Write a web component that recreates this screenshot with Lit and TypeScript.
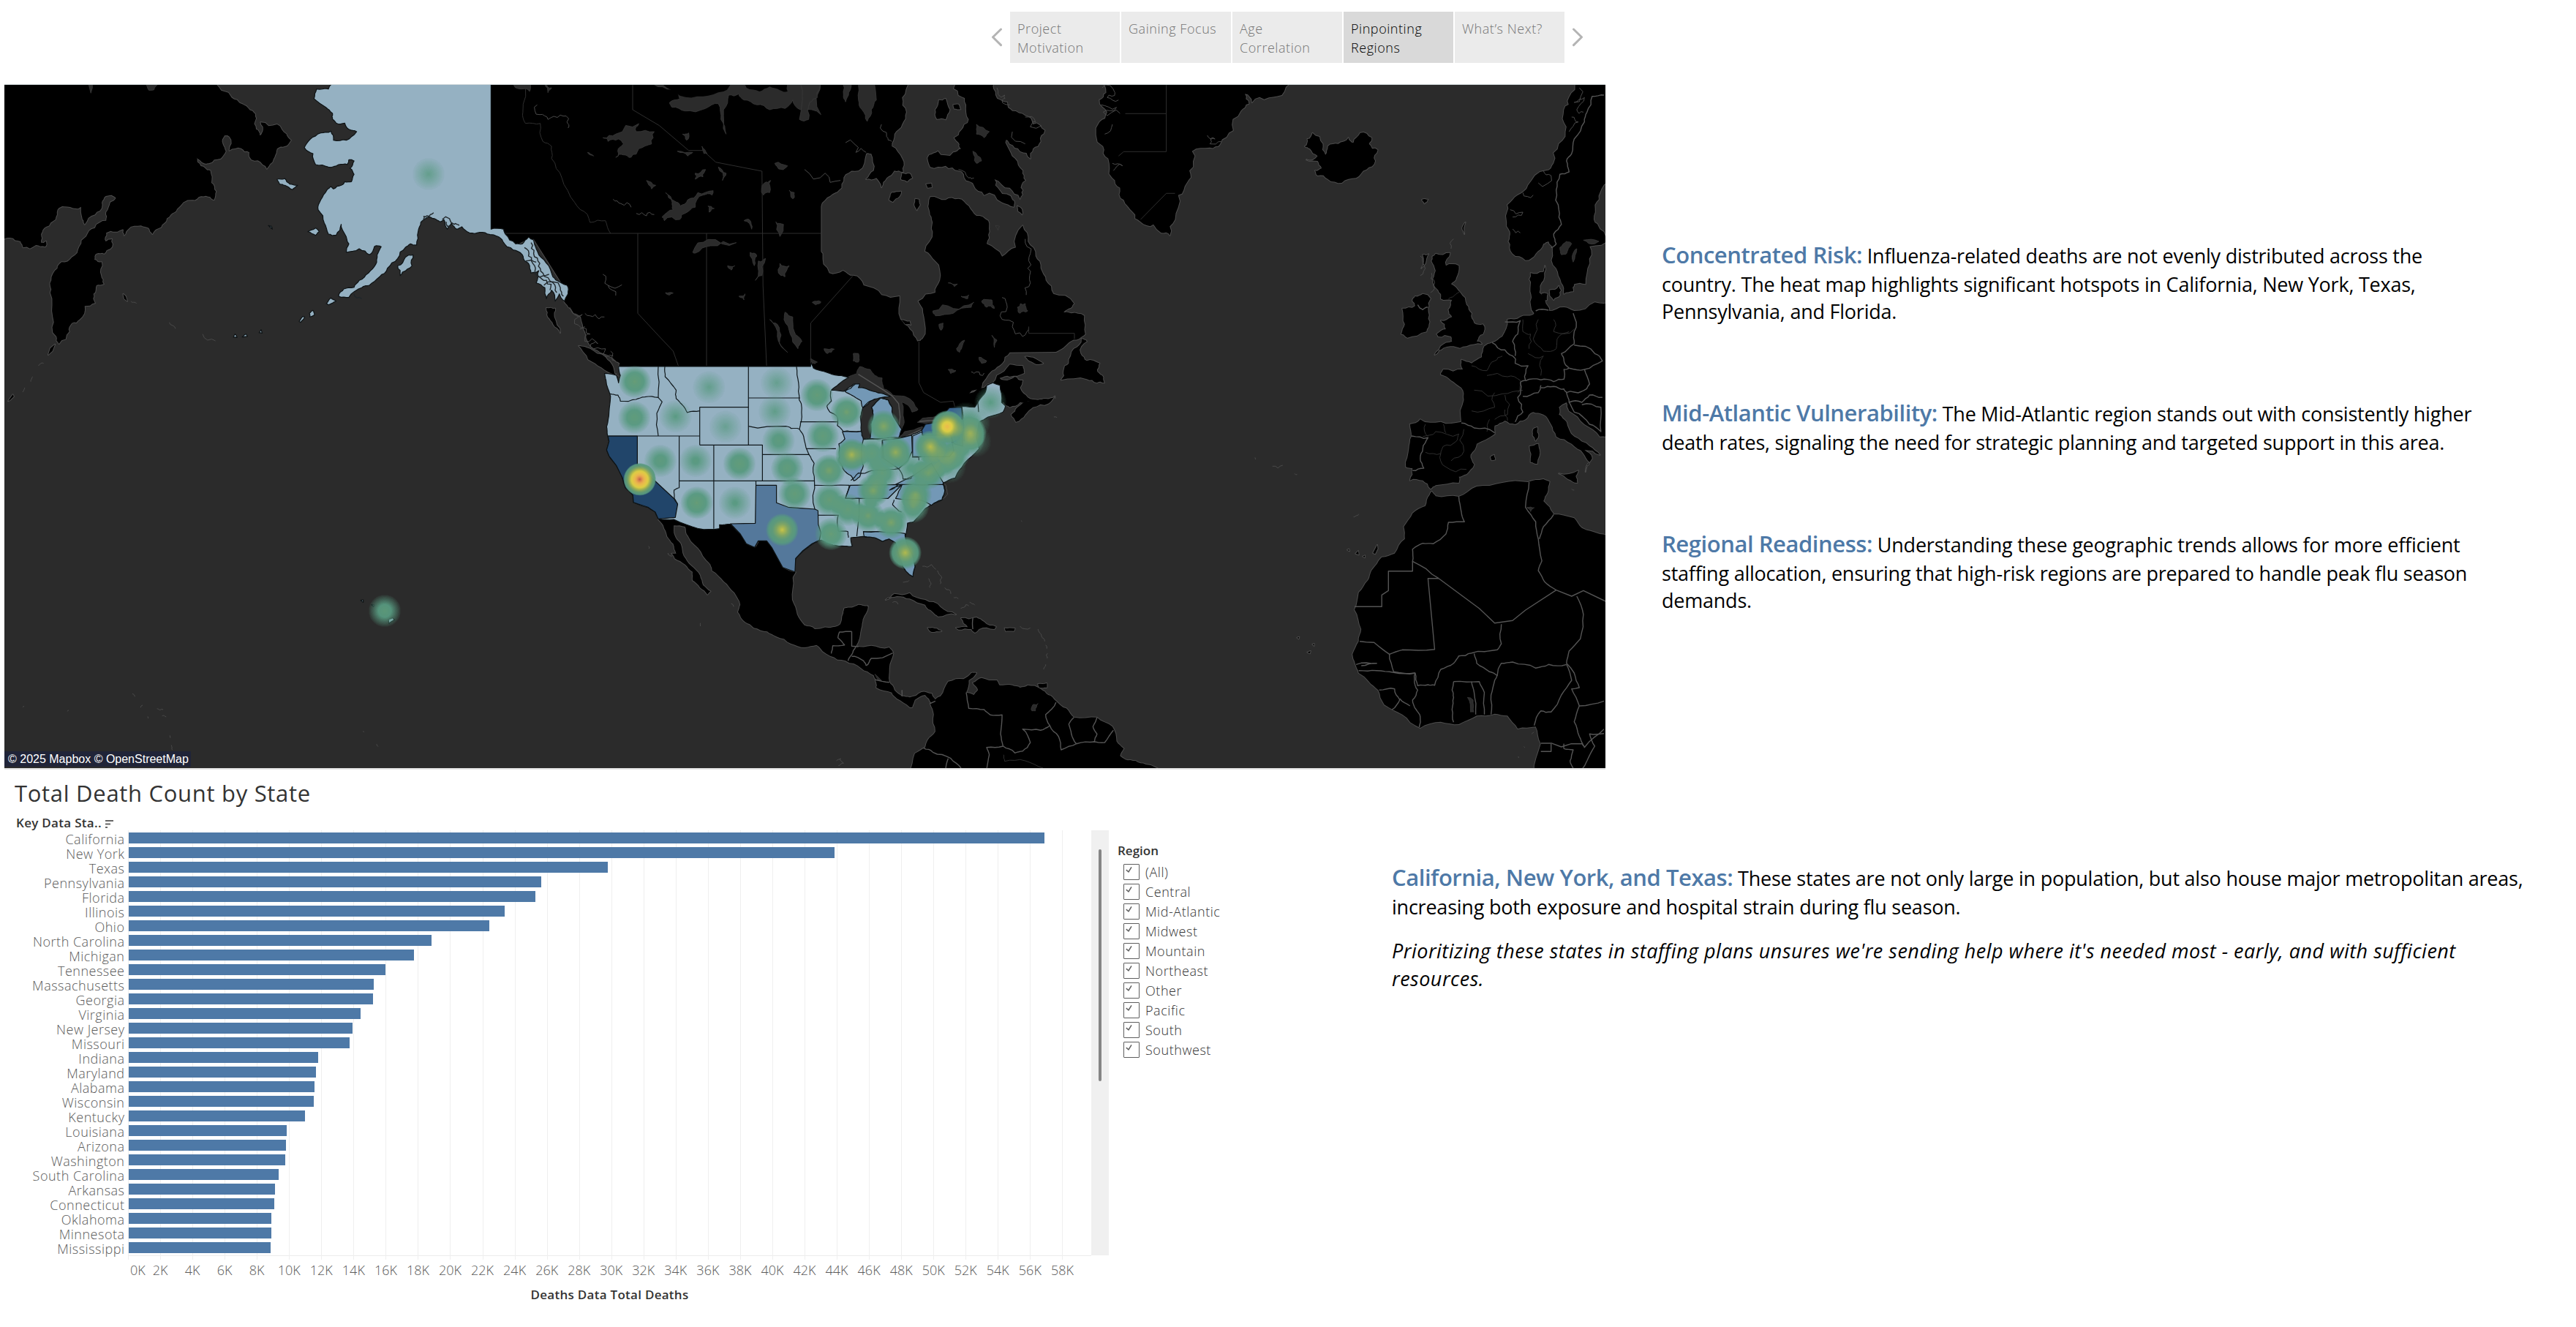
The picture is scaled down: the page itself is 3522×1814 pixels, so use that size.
import { LitElement, html, svg, css } from "lit";
import { customElement } from "lit/decorators.js";

type Pt = [number, number];

/* Map sections: each has an origin on the page and its own horizontal unit. */
interface Section { x: number; y: number; sx: number; sy: number }
const NW: Section = { x: 0, y: 100, sx: 1100 / 1568, sy: 1 / 3 };
const NE: Section = { x: 1100, y: 100, sx: 1100 / 1568, sy: 1 / 3 };
const SW: Section = { x: 0, y: 560, sx: 1100 / 1568, sy: 1 / 3 };
const SE: Section = { x: 1100, y: 560, sx: 1100 / 1568, sy: 1 / 3 };
const US: Section = { x: 800, y: 470, sx: 640 / 1568, sy: 1 / 3 };

const project = (s: Section, pts: string): Pt[] =>
  pts.trim().split(/\s+/).map((p) => {
    const [a, b] = p.split(",").map(Number);
    return [s.x + a * s.sx, s.y + b * s.sy] as Pt;
  });

/* Deterministic noise so coastlines look irregular yet always identical. */
const noise = (a: number, b: number) => {
  const v = Math.sin(a * 12.9898 + b * 78.233) * 43758.5453;
  return v - Math.floor(v) - 0.5;
};
const roughen = (pts: Pt[], amp: number, closed: boolean, depth = 2): Pt[] => {
  if (!depth || !amp) return pts;
  const out: Pt[] = [];
  const n = pts.length;
  for (let i = 0; i < n; i++) {
    const a = pts[i];
    out.push(a);
    if (i === n - 1 && !closed) break;
    const b = pts[(i + 1) % n];
    const dx = b[0] - a[0], dy = b[1] - a[1], len = Math.hypot(dx, dy);
    if (len < 3 || len > 60) continue;
    const k = noise(a[0] + b[0], a[1] + b[1]) * amp;
    out.push([(a[0] + b[0]) / 2 - dy * k, (a[1] + b[1]) / 2 + dx * k]);
  }
  return roughen(out, amp, closed, depth - 1);
};
const d = (s: Section, pts: string, amp = 0, closed = true) =>
  "M" + roughen(project(s, pts), amp, closed).map((p) => p[0].toFixed(1) + " " + p[1].toFixed(1)).join("L") + (closed ? "Z" : "");

const LAND: [Section, string, number][] = [
  // Eastern Russia and Kamchatka
  [NW, "0,30 412,30 422,47 445,80 462,110 475,130 492,155 499,185 499,230 506,255 512,240 508,202 540,210 558,250 567,275 555,300 540,310 535,345 528,370 520,392 512,375 490,355 486,325 470,308 447,317 447,260 438,255 434,290 440,320 430,350 407,370 398,370 382,345 385,365 400,390 410,400 412,450 421,485 417,520 410,508 392,505 375,520 345,557 333,580 320,615 305,640 297,660 290,635 275,625 250,640 242,665 240,640 225,650 207,655 206,690 218,680 215,720 203,740 188,740 184,765 198,775 197,830 202,865 188,870 182,905 185,943 165,955 155,1010 140,1025 135,1060 115,1110 110,1080 103,1000 98,900 100,850 112,800 120,775 140,755 155,710 168,670 185,635 207,605 207,570 215,530 226,512 218,500 203,510 199,540 185,580 165,620 160,590 158,548 148,555 125,547 112,560 108,600 90,630 80,660 80,695 90,690 88,712 70,705 45,715 40,690 20,675 0,690", 0.35],
  [NW, "107,1112 102,1140 94,1155 98,1128", 0],
  [NW, "16,1345 25,1318 27,1326 20,1340", 0],
  [NW, "240,905 245,915 248,935 242,925", 0],
  // Western Canada
  [NW, "950,30 1600,30 1600,1210 1207,1210 1208,1190 1195,1170 1170,1145 1148,1110 1140,1060 1132,1000 1118,985 1108,960 1098,925 1100,880 1040,680 1020,690 1005,710 985,660 950,640", 0.2],
  [NW, "1128,1118 1150,1130 1180,1165 1195,1205 1200,1237 1185,1225 1160,1190 1138,1145", 0.3],
  [NW, "1065,963 1082,965 1080,1000 1092,1065 1078,1030 1068,1000", 0.3],
  // Central and eastern Canada
  [NE, "-10,30 200,30 190,100 198,160 190,210 175,250 170,300 190,350 192,405 175,400 160,430 150,468 140,430 120,435 135,400 130,330 120,330 105,400 80,415 72,470 60,490 40,520 30,580 18,620 17,700 35,740 48,820 75,810 95,830 115,870 150,910 185,915 187,1010 205,1050 220,1100 230,1090 233,1000 222,935 255,900 264,850 255,770 235,730 250,650 248,600 243,560 245,508 275,520 300,515 320,545 335,585 358,605 360,650 355,700 385,752 412,715 425,625 435,690 450,750 460,800 470,850 485,905 525,945 515,965 485,1000 520,985 545,995 547,1070 535,1090 515,1105 490,1143 400,1145 385,1190 365,1220 345,1290 310,1325 350,1290 375,1240 400,1195 425,1200 428,1230 400,1245 380,1250 395,1260 410,1245 425,1260 420,1290 435,1330 455,1340 470,1335 488,1325 475,1355 445,1370 430,1400 412,1430 403,1400 415,1370 440,1345 420,1350 400,1370 388,1350 330,1400 300,1490 190,1495 100,1400 -10,1300", 0.3],
  [NE, "290,30 370,40 372,90 395,120 405,155 430,175 445,210 468,235 460,280 445,310 440,350 420,320 400,290 385,240 395,300 410,350 425,400 430,440 425,480 420,515 400,470 370,435 380,480 405,520 408,548 385,530 350,500 330,460 315,440 300,400 275,380 245,385 243,335 260,320 290,325 305,310 300,285 292,265 305,235 320,190 315,130 300,90", 0.5],
  [NE, "262,110 275,105 283,150 275,190 258,188 255,150", 0.3],
  [NE, "290,130 300,128 304,148 292,146", 0.2],
  [NE, "165,520 170,490 188,485 185,505 172,528", 0.2],
  [NE, "216,515 223,518 225,540 219,562 214,540", 0.2],
  [NE, "237,455 247,452 248,468 240,470", 0],
  [NE, "190,410 205,412 210,430 200,445 188,435", 0.3],
  [NE, "188,1012 205,1018 207,1032 196,1030", 0.2],
  [NE, "415,545 424,560 424,580 416,565", 0.2],
  [NE, "540,1090 550,1100 538,1150 550,1180 575,1190 570,1215 580,1240 584,1270 570,1270 550,1255 500,1258 505,1220 515,1190 525,1130", 0.4],
  [NE, "430,1163 445,1166 465,1190 452,1194 438,1180", 0.1],
  // Greenland and Iceland
  [NE, "575,30 588,80 575,110 590,160 575,200 582,300 592,350 600,430 615,470 622,520 640,570 655,610 680,620 695,655 712,665 722,600 728,500 745,450 750,400 755,320 790,305 810,290 835,235 850,155 866,125 858,85 872,120 905,100 935,75 960,30", 0.45],
  [NE, "990,245 1010,290 1015,335 1020,300 1040,290 1060,265 1070,285 1083,245 1105,265 1100,290 1117,315 1112,360 1095,395 1075,430 1047,450 1020,435 1000,420 995,400 1008,390 1000,360 978,355 1000,340 985,310 975,300 980,270", 0.4],
  // British Isles
  [NE, "1230,740 1258,737 1250,790 1275,790 1270,840 1260,865 1278,900 1290,950 1300,985 1305,1025 1322,1030 1322,1070 1310,1100 1320,1110 1290,1120 1265,1120 1240,1135 1228,1155 1240,1120 1262,1100 1260,1080 1235,1080 1232,1070 1250,1050 1240,1015 1262,1000 1255,970 1262,930 1240,925 1235,890 1225,860 1230,810 1222,770", 0.35],
  [NE, "1190,915 1205,905 1220,925 1215,965 1218,1020 1212,1060 1175,1085 1163,1070 1170,1030 1165,965 1190,955 1185,935", 0.35],
  [NE, "1205,745 1216,742 1210,780 1202,800", 0.3],
  [NE, "1203,520 1215,518 1208,535", 0.3],
  [NE, "1282,640 1288,612 1286,660", 0.3],
  // Scandinavia and Denmark
  [NE, "1508,30 1490,100 1480,150 1485,220 1470,290 1460,370 1445,400 1410,460 1390,500 1370,540 1368,600 1375,650 1372,690 1380,740 1405,767 1425,740 1440,700 1450,690 1458,730 1465,800 1475,860 1480,905 1498,895 1500,865 1522,865 1530,780 1530,710 1575,690 1550,640 1538,600 1540,540 1550,490 1575,440 1575,30", 0.35],
  [NE, "1415,870 1415,820 1440,815 1443,790 1440,850 1432,900 1450,960 1452,985 1422,985 1417,920", 0.3],
  [NE, "1452,890 1470,872 1472,910 1460,930", 0.4],
  [NE, "1436,905 1448,905 1447,930 1438,930", 0.3],
  // Continental Europe
  [SE, "1425,-405 1420,-390 1395,-380 1370,-370 1360,-300 1340,-275 1325,-260 1320,-215 1300,-190 1280,-205 1283,-165 1245,-165 1240,-145 1260,-120 1280,-90 1285,-40 1280,50 1240,50 1200,40 1180,60 1183,110 1178,160 1172,235 1185,240 1180,290 1205,290 1220,325 1230,310 1275,300 1275,275 1290,265 1305,225 1298,185 1310,140 1345,100 1345,65 1365,45 1385,60 1405,40 1420,10 1440,20 1455,60 1465,110 1495,140 1518,180 1530,215 1522,255 1535,200 1520,165 1550,185 1530,150 1500,110 1485,50 1470,20 1470,-10 1485,-30 1490,5 1520,60 1550,110 1575,110 1575,-445 1540,-440 1500,-405 1480,-420 1450,-405", 0.25],
  [SE, "1420,80 1428,72 1430,100 1425,128 1419,105", 0.3],
  [SE, "1413,150 1430,140 1432,190 1428,222 1415,215", 0.2],
  [SE, "1470,262 1508,250 1503,272 1506,300 1488,285", 0.2],
  [SE, "1337,195 1344,185 1346,205 1339,208", 0.2],
  // Africa
  [SE, "1222,335 1230,355 1275,357 1310,315 1360,300 1410,297 1440,285 1452,295 1448,340 1440,375 1452,400 1460,430 1500,445 1515,485 1550,510 1575,525 1575,1490 1422,1490 1435,1370 1425,1300 1390,1308 1370,1255 1345,1247 1310,1255 1275,1290 1240,1280 1200,1305 1165,1250 1130,1210 1118,1150 1100,1115 1080,1080 1073,1040 1068,1003 1080,950 1085,900 1072,820 1080,750 1098,700 1105,660 1125,605 1150,590 1170,530 1168,480 1185,425 1210,395 1218,350", 0.14],
  [SE, "1058,575 1061,572 1062,580", 0], [SE, "1074,590 1079,580 1080,595", 0], [SE, "1088,602 1092,598 1092,606", 0], [SE, "1108,588 1116,555 1117,570 1112,592", 0],
  [SE, "960,935 964,932 963,940", 0], [SE, "980,995 986,990 985,1000", 0], [SE, "990,962 993,960 993,968", 0],
  // Mexico and Central America
  [US, "245,720 297,718 380,758 450,758 450,742 487,740 510,765 530,795 540,820 570,835 582,808 610,810 630,840 650,885 665,920 705,937 695,960 693,1050 710,1110 735,1155 770,1175 820,1165 855,1150 868,1085 920,1072 948,1078 930,1130 925,1165 915,1200 900,1240 905,1280 820,1270 775,1235 735,1245 690,1230 640,1200 610,1180 565,1165 535,1140 512,1100 520,1070 500,1020 465,975 425,930 420,905 395,870 355,810 340,780 335,750 297,745 300,785 320,820 330,870 355,910 385,950 395,990 420,1015 410,1028 385,1000 360,970 360,935 335,905 300,880 290,860 305,860 295,820 275,790 262,745", 0.15],
  [SE, "0,885 20,900 60,895 75,870 78,815 105,800 123,805 112,860 108,900 100,970 130,968 165,975 173,1000 165,1060 165,1115 175,1150 190,1175 205,1180 228,1158 248,1165 255,1190 248,1205 235,1170 215,1190 210,1220 205,1220 180,1185 170,1160 140,1140 140,1120 135,1090 110,1060 80,1030 50,1010 25,962 0,965", 0.2],
  // South America
  [SE, "248,1200 265,1175 280,1115 310,1105 325,1080 335,1080 320,1110 315,1160 330,1170 338,1150 328,1120 345,1100 375,1110 380,1130 405,1130 420,1140 435,1130 460,1145 475,1170 490,1195 510,1225 525,1262 570,1262 600,1300 608,1360 622,1390 615,1420 625,1435 645,1440 665,1455 700,1490 203,1490 215,1410 235,1385 240,1355 255,1320 252,1250 245,1205", 0.18],
  // Caribbean
  [SE, "158,780 175,755 205,752 235,780 265,810 295,840 260,848 250,830 235,800 205,775 180,765", 0.25],
  [SE, "295,895 318,892 310,875 305,855 335,852 350,870 373,890 370,900 340,900 332,915 325,900 300,902", 0.25],
  [SE, "240,895 258,898 267,908 248,912", 0.2],
  [SE, "390,896 410,897 408,908 392,908", 0.1],
  [SE, "455,1125 472,1122 472,1140 458,1140", 0.2],
];

/* Fine islands, drawn as faint strokes only. */
const SPECKS: [Section, string][] = [
  [US, "1130,912 1160,905 1175,925"], [US, "1150,962 1158,980 1155,1000"], [US, "1180,930 1195,960 1190,985"], [US, "1205,1000 1225,1025"], [US, "1235,1040 1250,1045"], [US, "1258,1085 1275,1070 1285,1075"], [US, "1288,1060 1305,1072"],
  [US, "1030,1062 1045,1060 1048,1068"], [US, "1165,658 1180,640 1205,630 1212,600 1200,575"], [US, "1065,978 1085,970"],
  [SE, "455,900 462,930 468,950"], [SE, "470,965 472,980"], [SE, "474,1000 473,1020"], [SE, "470,1045 466,1065"], [SE, "420,888 440,895"],
  [SE, "912,232 932,228"], [SE, "955,262 960,266"], [SE, "878,196 879,204"], [SE, "1070,440 1080,428"], [SE, "422,455 424,459"], [SE, "62,1440 70,1430 76,1450 66,1460"],
  [SW, "44,1220 47,1216"], [SW, "131,1237 134,1232"], [SW, "258,1165 263,1177"], [SW, "274,1222 278,1212"], [SW, "306,1226 318,1230"], [SW, "316,1256 324,1260"], [SW, "331,1336 332,1346"], [SW, "334,1376 336,1396"], [SW, "734,1372 737,1382"], [SW, "708,1318 709,1323"], [SW, "1264,560 1265,570"], [SW, "1365,875 1365,888"], [SW, "1425,795 1430,808"], [SW, "1302,588 1310,600"], [SW, "288,1258 289,1266"],
  [NW, "395,1070 420,1098"], [NW, "330,1022 342,1048"], [NW, "75,1200 85,1190"], [NW, "64,1245 60,1265"], [NW, "48,1290 44,1308"], [NW, "255,935 266,945"],
  [NE, "1200,750 1208,790 1200,830"], [NE, "1222,820 1228,860 1220,900"], [NE, "1265,680 1260,720"], [NE, "485,1328 490,1332"], [NE, "486,1410 492,1412"],
  [SE, "1495,325 1500,330"], [SE, "1402,1382 1404,1386"], [SE, "1391,1422 1392,1428"], [SE, "1417,1330 1421,1322"],
];

/* Inlets and fjords. */
const FJORDS: [Section, string][] = [
  [NE, "580,60 605,80 590,100 612,110"], [NE, "578,130 608,140 582,160 615,165"], [NE, "600,210 585,250"], [NE, "600,370 620,380 602,400"], [NE, "785,255 800,270 790,290 812,280"],
  [NE, "375,60 390,90 385,110 400,130"], [NE, "430,180 450,200 440,220 462,215"], [NE, "405,240 430,290"], [NE, "300,395 320,430 330,430"],
  [NE, "1510,60 1500,120 1520,100 1505,150 1518,160"], [NE, "1495,180 1508,200 1490,240"], [NE, "1440,400 1455,420 1430,450"], [NE, "1400,490 1420,500"], [NE, "1375,560 1400,570 1380,590"], [NE, "1380,640 1395,655"],
  [NE, "150,210 160,260 170,280"], [NE, "80,285 100,325 120,325"], [NE, "0,395 40,410 70,440"],
  [NW, "1110,960 1135,990 1120,1010 1140,1040"], [NW, "1130,1050 1150,1070 1140,1100 1165,1110 1150,1120 1180,1130 1170,1150 1195,1160"], [NW, "1190,1140 1200,1180"],
  [NW, "1175,825 1185,870 1200,912"], [NW, "1185,870 1212,868"], [NW, "1140,985 1160,990 1178,1000"], [NW, "1047,130 1052,170 1068,190 1092,172 1105,200 1107,225"], [NW, "1240,575 1260,585 1275,580"], [NW, "1195,517 1210,535 1230,550"],
  [NE, "430,680 440,740 435,800 440,860 432,910"], [NE, "385,920 395,960 385,1010 405,1040 425,1080 437,1040"],
  [US, "105,120 118,140 108,170 115,150"],
  [NE, "350,1230 335,1225 325,1225"],
];

const WATER: [Section, string, number][] = [
  [NW, "172,40 180,40 180,60 177,82", 0],
  [NW, "283,40 307,47 300,68 290,70", 0.2],
  [NW, "1175,265 1200,250 1245,207 1240,240 1275,240 1270,290 1245,310 1230,345 1215,335 1200,345 1205,310 1215,290 1205,270 1185,280", 0.5],
  [NW, "1297,490 1315,525 1325,545 1340,520 1360,490 1390,482 1388,500 1370,500 1355,550 1335,575 1325,600 1295,605 1290,590 1312,560 1310,530", 0.4],
  [NW, "1265,40 1300,65 1320,80 1325,105 1305,120 1310,140 1335,155 1375,145 1400,125 1405,190 1415,250 1410,150 1420,90 1440,85 1450,110 1475,130 1500,150 1530,145 1545,110 1560,150 1600,170 1600,30", 0.3],
  [NW, "998,40 1035,45 1032,75 1015,65", 0.4],
  [NW, "1062,45 1075,60 1068,80", 0.4],
  [NW, "1350,735 1380,682 1435,695 1385,708 1355,738", 0.4],
  [NW, "1500,1010 1515,1030 1520,1090 1535,1145 1515,1080", 0.4],
  [NW, "1530,980 1545,1000 1548,1060 1563,1100 1555,1130 1540,1070 1528,1010", 0.4],
  [NW, "1490,450 1502,440 1500,490 1488,500", 0.5], [NW, "1538,480 1548,490 1545,515", 0.5], [NW, "1510,370 1535,380 1530,390 1515,385", 0.5],
  [NW, "1520,780 1538,790 1530,835 1522,830", 0.4], [NW, "1462,735 1475,750 1470,790", 0.4], [NW, "1478,770 1492,760 1485,830 1472,850", 0.4], [NW, "1440,915 1452,905 1450,930", 0.4],
  [NW, "1450,605 1460,600 1465,640", 0.4], [NW, "1512,610 1527,620 1520,670", 0.4], [NW, "1260,440 1278,460 1270,475", 0.4], [NW, "1330,250 1342,245 1338,275", 0.4], [NW, "1368,300 1378,330 1372,330", 0.4],
  [NW, "1355,410 1375,395 1370,425 1355,435", 0.5], [NW, "1400,385 1415,410 1408,440", 0.5], [NW, "1418,790 1432,790 1425,808", 0.4], [NW, "1297,900 1312,902 1305,910", 0.3], [NW, "1380,545 1392,555 1382,570", 0.4], [NW, "1320,320 1350,325 1340,340", 0.3], [NW, "1145,325 1157,340 1150,335", 0.3],
  [NE, "-10,30 32,30 25,100 10,120 8,190 -10,190", 0.4],
  [NE, "75,30 90,30 86,80 80,118 76,90", 0.3],
  [NE, "103,30 140,30 140,110 130,150 122,198 112,150 105,110", 0.3],
  [NE, "335,210 360,240 350,265 335,250", 0.3],
  [NE, "328,320 345,360 335,370", 0.4],
  [NE, "372,625 380,628 377,645", 0.2],
  [NE, "250,975 290,965 330,940 325,960 290,985 255,995", 0.5], [NE, "345,935 365,930 370,965 355,960", 0.5], [NE, "415,960 430,945 435,975 420,985", 0.5], [NE, "280,860 298,865 292,875", 0.3], [NE, "305,915 320,910 318,925", 0.3],
  [NE, "296,1130 312,1095 308,1115 302,1145", 0.3], [NE, "365,1075 375,1095 370,1125", 0.4], [NE, "95,1150 105,1150 105,1185 95,1180", 0.3], [NE, "280,1215 295,1220 285,1232", 0.3], [NE, "38,1130 58,1132 45,1150", 0.4], [NE, "12,1170 25,1185 15,1190", 0.4], [NE, "340,1165 355,1180 345,1190", 0.4], [NE, "262,1030 270,1025 266,1055", 0.3], [NE, "15,940 32,938 22,950", 0.4],
  [NE, "1472,715 1485,690 1495,700 1485,740 1475,745", 0.3], [NE, "1500,730 1505,720 1498,775", 0.3], [NE, "1518,685 1548,690 1540,700", 0.3],
  // Great Lakes
  [US, "825,190 870,145 910,122 920,93 955,105 970,130 995,140 1000,185 1030,210 1070,215 1100,240 1115,270 1095,280 1080,250 1060,240 1068,310 1060,350 1050,360 1000,300 945,390 925,385 920,200", 0.2],
  [US, "1050,385 1070,360 1130,340 1130,350 1100,370 1060,390", 0.1],
  [US, "1113,322 1130,305 1175,298 1195,300 1190,325 1150,330", 0.1],
  [SE, "1408,400 1422,402 1415,418", 0.4], [SE, "445,1210 455,1205 450,1235 443,1235", 0.4], [SE, "1292,1180 1303,1190 1304,1240 1298,1240", 0.3], [SE, "137,1085 150,1110 143,1108", 0.1],
];

const NORTH_ISLES: [Section, string][] = [
  [NW, "1285,30 1430,30 1410,75 1370,95 1325,92 1300,60"],
  [NW, "1440,30 1530,30 1535,75 1520,70 1500,55 1480,75 1455,60"],
];

/* Provincial lines (faint) and national borders (brighter). */
const PROVINCES: [Section, string, number][] = [
  [NW, "1019,30 1019,160 1024,206 1053,206 1058,280 1075,300 1075,350 1095,430 1120,530 1145,580 1150,612 1180,605 1190,657", 0.2],
  [NW, "1233,30 1233,150 1285,215 1342,317 1370,317 1395,365 1485,402 1487,870 1494,1200", 0],
  [NW, "985,657 1600,657", 0],
  [NW, "1243,657 1243,985 1285,1080 1312,1140 1322,1200", 0],
  [NW, "1377,657 1377,1200", 0],
  [NE, "94,832 12,1025 12,1190", 0],
  [NE, "223,1100 223,1270 232,1310 265,1350 290,1345 293,1368", 0],
  [NE, "705,30 705,322 622,322 612,340", 0],
  [NE, "625,166 705,166", 0],
  [NE, "655,600 705,493 722,493", 0],
  [NE, "437,1040 437,1067 526,1067 526,1090", 0],
  [NE, "1400,1010 1400,1060 1415,1070 1412,1130", 0.4], [NE, "1430,1010 1420,1090 1440,1140 1465,1130 1470,1080 1490,1060", 0.4],
  [NE, "1300,1200 1330,1220 1345,1180 1360,1160", 0.4], [NE, "1305,1300 1360,1315 1400,1300", 0.4], [NE, "1330,1240 1370,1245 1395,1260 1390,1310", 0.4], [NE, "1345,1310 1345,1370 1300,1385", 0.4], [NE, "1365,1320 1370,1400 1345,1420", 0.4],
  [NE, "1460,1010 1460,1060 1500,1050", 0.4], [NE, "1410,1150 1440,1160 1435,1240", 0.4],
  [SE, "1205,110 1230,90 1275,100 1270,130 1245,150 1240,180 1210,175", 0.4], [SE, "1240,180 1250,235 1290,245", 0.4], [SE, "1285,80 1285,170 1260,210", 0.4], [SE, "1210,60 1215,110", 0.4], [SE, "1245,60 1250,95", 0.4],
  [SE, "1335,40 1330,90", 0.3], [SE, "1365,0 1370,45", 0.4],
  [SE, "388,1415 390,1442 430,1440 465,1470", 0.2],
  [NE, "1255,925 1270,905 1278,895", 0.2],
];
const BORDERS: [Section, string, number][] = [
  [NE, "1558,90 1535,95 1525,160 1520,200 1500,270 1495,330 1485,360 1490,405 1472,415 1465,480 1470,560 1475,620 1460,660 1465,700 1455,715", 0.2],
  [SE, "1183,108 1215,115 1205,160 1200,200 1207,240 1185,250", 0.3],
  [SE, "1280,55 1305,75 1345,95", 0.3],
  [NE, "1340,1105 1365,1135 1385,1170 1385,1190 1410,1200 1405,1260 1395,1270 1390,1330 1400,1390 1385,1430", 0.3],
  [NE, "1365,1020 1395,1015 1390,1070 1380,1100 1385,1160", 0.3],
  [NE, "1498,985 1500,1060 1500,1110 1475,1150 1480,1180 1490,1210 1520,1215 1555,1180 1540,1150 1500,1115", 0.3],
  [NE, "1405,1262 1435,1258 1460,1265 1480,1255 1480,1215 1490,1210", 0.3],
  [NE, "1435,1290 1460,1285 1480,1295 1485,1310 1515,1305 1530,1275 1520,1215", 0.3],
  [NE, "1400,1325 1430,1310 1435,1280", 0.3], [NE, "1485,1310 1490,1350 1515,1350 1530,1320 1555,1330", 0.3], [NE, "1490,1350 1500,1390 1530,1440 1552,1470 1552,1370 1515,1360", 0.2], [NE, "1425,975 1450,972", 0.2], [NE, "1195,950 1205,970 1215,960", 0.3],
  [SE, "1275,357 1280,420 1286,460 1255,462 1250,510 1225,550 1205,548 1185,572 1185,622 1236,692", 0.12],
  [SE, "1185,622 1185,662 1138,662 1138,742 1125,760 1125,808 1072,808", 0],
  [SE, "1236,692 1215,692 1228,983 1165,985 1140,1003 1110,955 1082,950", 0.05],
  [SE, "1236,692 1315,815 1345,875 1380,865 1405,822 1465,740 1495,765 1518,742 1575,800", 0],
  [SE, "1412,297 1405,400 1425,460 1430,530 1437,620 1430,660 1442,705 1465,740", 0.1],
  [SE, "1460,430 1440,480 1432,530", 0.1],
  [SE, "1505,765 1518,840 1512,940 1490,990 1485,1040 1500,1080 1510,1140 1495,1145 1510,1215 1558,1195", 0.1],
  [SE, "1358,880 1358,960 1350,985 1300,998 1275,1010 1265,1040 1240,1065 1228,1130 1215,1128 1195,1132 1190,1080 1148,1075 1140,1003", 0.2],
  [SE, "1305,1000 1310,1040 1335,1075 1350,1090 1345,1110 1338,1170 1338,1250", 0.15],
  [SE, "1350,1090 1358,1040 1380,1035 1425,1060 1450,1045 1485,1045", 0.2],
  [SE, "1485,1045 1495,1110 1475,1170 1455,1240 1435,1235 1422,1295", 0.2],
  [SE, "1265,1115 1315,1115 1325,1160 1325,1250", 0.1], [SE, "1300,1115 1305,1160 1308,1250", 0.1], [SE, "1265,1115 1262,1150 1265,1180 1262,1230 1265,1282", 0.15],
  [SE, "1190,1080 1190,1130 1195,1150 1185,1190 1192,1230 1200,1260 1198,1302", 0.2], [SE, "1120,1150 1150,1145 1160,1190 1145,1230", 0.2], [SE, "1160,1185 1180,1215", 0.2], [SE, "1080,1070 1115,1070 1148,1078 1190,1080", 0.1], [SE, "1075,1045 1115,1040 1085,1050", 0.2],
  [SE, "1435,1368 1515,1370 1520,1385 1558,1310", 0.2], [SE, "1435,1402 1455,1402 1455,1370", 0], [SE, "1480,1370 1480,1390 1498,1395 1492,1440 1498,1470", 0.2], [SE, "1510,1215 1500,1280 1510,1340 1518,1380", 0.15], [SE, "1558,1328 1530,1330 1540,1380 1525,1440 1515,1475", 0.1],
  [SE, "315,1160 320,1225 350,1230 362,1252 385,1252 382,1330 387,1380 355,1385 360,1415 355,1475", 0.1],
  [SE, "387,1380 410,1408 425,1400 440,1365 425,1310 460,1315 478,1295 470,1250 490,1200", 0.2],
  [SE, "478,1295 495,1340 500,1395 530,1370 520,1330 515,1290 525,1262", 0.15], [SE, "530,1370 565,1362 570,1330 562,1300 570,1262", 0.15], [SE, "562,1362 585,1365 602,1315", 0.1],
  [SE, "232,1388 250,1405 285,1430 305,1470", 0.2], [SE, "280,1430 275,1480", 0.1],
  [SE, "92,910 68,912 65,935 78,965 55,968 52,1000", 0.1], [SE, "92,910 92,970 105,972", 0], [SE, "100,972 92,1005 85,1030", 0.2], [SE, "92,1012 115,1030 120,1050", 0.2], [SE, "120,1050 130,1020 172,998", 0.2], [SE, "138,1108 165,1118", 0.1], [SE, "190,1150 190,1175", 0.1], [SE, "328,855 328,900", 0.1], [SE, "245,1205 255,1195", 0],
  [US, "915,125 1000,190 1030,215 1050,245 1055,300 1050,360", 0], [US, "1060,388 1125,352", 0], [US, "1120,318 1190,312", 0],
];

/* States with deaths data, shaded from light to dark. */
const STATES: { fill: string; s: Section; pts: string; amp: number }[] = [
  { fill: "#95b1c2", s: NW, amp: 0.25, pts: "655,30 957,30 957,640 982,640 985,660 1005,700 1018,700 1030,672 1040,685 1045,720 1060,765 1075,820 1083,848 1105,870 1107,905 1100,935 1090,905 1082,935 1075,890 1065,925 1062,880 1045,860 1050,810 1035,820 1030,780 1020,760 1018,745 1000,725 980,690 970,670 955,662 935,653 915,655 900,630 890,640 880,615 872,640 865,600 858,610 850,600 835,590 820,612 815,650 812,705 800,700 790,715 775,760 755,800 740,835 720,870 705,880 680,920 660,915 670,885 690,878 700,850 718,820 732,785 735,745 743,712 730,710 720,745 700,720 675,735 680,700 672,660 665,620 655,665 640,660 632,615 620,560 625,520 637,480 645,465 650,475 665,460 672,445 685,445 690,415 682,390 690,360 680,355 677,375 660,375 640,385 615,375 610,330 593,305 605,270 625,245 645,238 650,275 675,275 695,240 680,230 672,205 655,205 648,190 648,165 635,140 612,105 617,65 640,65" },
  { fill: "#95b1c2", s: NW, amp: 0.4, pts: "775,790 790,755 805,745 803,790 785,815 780,830" },
  { fill: "#95b1c2", s: NW, amp: 0.2, pts: "540,435 555,432 565,455 580,460 570,478 555,460 545,455" },
  { fill: "#95b1c2", s: NW, amp: 0.2, pts: "600,650 615,635 622,650 615,665" },
  { fill: "#95b1c2", s: NW, amp: 0.2, pts: "636,945 645,922 655,935 640,950" },
  { fill: "#95b1c2", s: NW, amp: 0.2, pts: "603,985 610,973 613,990 604,1000" },
  { fill: "#95b1c2", s: NW, amp: 0.2, pts: "583,1018 590,998 594,1000 586,1022" },
  { fill: "#95b1c2", s: NW, amp: 0.2, pts: "505,1065 509,1052 511,1066" },
  { fill: "#95b1c2", s: NW, amp: 0.2, pts: "455,1083 458,1070 462,1084" },
  { fill: "#95b1c2", s: NW, amp: 0.2, pts: "472,1082 480,1070 482,1080" },
  { fill: "#95b1c2", s: NW, amp: 0, pts: "523,625 529,628 531,640" },
  { fill: "#95b1c2", s: SW, amp: 0, pts: "703,782 708,780 708,790" },
  { fill: "#95b1c2", s: SW, amp: 0, pts: "724,800 729,801 728,808" },
  { fill: "#95b1c2", s: SW, amp: 0.2, pts: "757,860 765,853 769,862 758,878" },
  // Contiguous United States
  { fill: "#95b1c2", s: US, amp: 0.1, pts: "112,93 755,93 757,80 765,100 800,113 850,130 883,138 850,165 825,190 865,195 900,165 920,165 915,180 965,195 1000,205 1022,215 985,222 955,235 945,250 930,262 922,300 925,360 930,390 958,388 955,330 965,290 960,260 990,222 1015,230 1028,260 1025,280 1060,350 1050,385 1090,375 1130,352 1140,330 1185,320 1200,290 1220,265 1235,260 1305,260 1320,230 1340,200 1345,170 1365,160 1390,170 1395,240 1408,255 1400,280 1350,300 1320,320 1310,380 1320,430 1270,490 1240,550 1200,570 1205,600 1195,640 1160,660 1140,675 1100,730 1080,735 1072,790 1100,880 1105,915 1098,955 1085,945 1065,915 1050,860 1040,815 1018,800 995,810 970,795 930,790 890,795 895,830 870,830 830,825 790,805 770,815 730,850 705,880 700,930 660,915 645,880 625,835 608,808 580,808 568,835 540,820 520,780 487,740 450,742 450,758 380,758 297,720 245,718 235,690 210,670 162,650 160,620 135,590 125,550 105,500 80,460 72,435 80,400 75,375 72,340 80,280 85,215 70,150 65,122 105,130 112,160 118,130" },
  { fill: "#7398b6", s: US, amp: 0.15, pts: "870,195 905,165 920,165 915,180 965,195 1000,205 1022,215 985,222 955,235 930,262 925,235 900,215" },
  { fill: "#7398b6", s: US, amp: 0.15, pts: "955,388 958,330 965,290 960,260 990,222 1015,230 1028,260 1028,280 1060,350 1050,385" },
  { fill: "#7398b6", s: US, amp: 0.15, pts: "862,360 925,358 932,392 932,500 920,545 900,562 890,540 868,520 850,480 850,410 870,390" },
  { fill: "#7398b6", s: US, amp: 0, pts: "996,395 1050,388 1094,375 1096,440 1080,480 1050,512 1000,470" },
  { fill: "#7398b6", s: US, amp: 0, pts: "1097,378 1130,360 1225,375 1235,440 1220,463 1097,463" },
  { fill: "#7398b6", s: US, amp: 0, pts: "888,580 1062,577 1015,634 872,634" },
  { fill: "#7398b6", s: US, amp: 0.15, pts: "1062,577 1198,575 1205,600 1195,640 1160,662 1120,640 1040,634" },
  { fill: "#7398b6", s: US, amp: 0, pts: "1100,540 1160,490 1200,570 1198,577 1040,577" },
  { fill: "#7398b6", s: US, amp: 0.1, pts: "932,770 985,770 1072,778 1072,790 1100,880 1105,915 1098,955 1085,945 1065,915 1050,860 1040,815 1018,800 995,810 970,795 935,790" },
  { fill: "#3a6390", s: US, amp: 0, pts: "1128,355 1140,330 1185,320 1200,290 1220,262 1262,260 1265,420 1235,410 1225,375 1130,375" },
  { fill: "#54789b", s: US, amp: 0, pts: "572,580 641,580 641,652 680,670 720,674 770,678 780,684 781,740 790,775 785,805 760,820 728,850 705,880 703,935 662,917 645,880 625,835 608,808 580,808 568,835 540,820 520,780 487,738 570,736" },
  { fill: "#21456a", s: US, amp: 0, pts: "77,378 175,378 175,495 302,640 310,658 302,712 245,718 235,690 210,670 162,650 160,620 135,590 125,550 105,500 80,460 72,435 80,400" },
];

/* Channels cut into the Alaskan coast. */
const CHANNELS: [Section, string][] = [
  [NW, "1022,715 1030,750 1042,790 1048,830 1065,850 1072,890"], [NW, "1035,695 1040,740 1052,780 1058,820 1078,860 1085,900"], [NW, "1025,770 1045,775"], [NW, "1045,830 1070,825"], [NW, "1060,870 1092,880 1098,915"],
  [NW, "845,572 832,585 825,600"], [NW, "862,600 885,620 895,625"], [NW, "870,610 880,635"], [NW, "690,905 705,925"],
];

const STATE_LINES: [string, number][] = [
  ["245,93 245,220 258,238 240,285 245,378", 0.1], ["83,205 110,210 118,235 170,228 200,218 245,220", 0.2], ["77,378 384,378", 0],
  ["267,93 268,135 305,190 305,225 325,250 342,282 384,275", 0.2], ["384,415 384,260 547,260", 0], ["547,93 547,415", 0], ["384,415 594,415 594,562", 0],
  ["547,222 720,222", 0], ["708,93 715,160 717,230 724,245 724,318", 0.1], ["547,338 672,338 690,347 718,350", 0.2], ["724,318 718,350 732,380 745,440 750,455 767,490 768,562 770,680", 0.15],
  ["594,454 752,454", 0], ["315,378 315,590 298,600 300,640 310,658", 0.1], ["431,415 431,758", 0], ["315,562 768,562", 0], ["572,562 572,580", 0],
  ["720,320 845,320", 0], ["740,430 840,430", 0], ["823,193 825,235 810,255 820,280 845,300 845,335 865,360 925,358", 0.15], ["767,580 885,580 872,634 918,634", 0.1],
  ["781,703 850,703", 0], ["848,703 845,740 850,770 880,770 882,795", 0.15], ["918,634 918,700 910,790", 0], ["932,770 985,770", 0], ["995,395 995,470", 0], ["933,392 996,388", 0],
  ["890,560 915,530 960,520 1000,520 1050,512 1065,555 1095,548", 0.3], ["1050,575 1020,600 1062,577", 0.2], ["1262,260 1270,400", 0.05], ["1315,230 1318,280", 0],
  ["1095,465 1118,465 1118,478", 0], ["1035,640 1030,660 1060,690", 0.2],
];

/* Deaths heat points: x, y on the page and relative weight. */
const usPoint = (x: number, y: number, w: number) => ({ x: US.x + x * US.sx, y: US.y + y * US.sy, w });
const HEAT = [
  { x: 586, y: 238, w: 0.085 }, { x: 526, y: 835, w: 0.16 },
  usPoint(166, 155, 0.22), usPoint(165, 302, 0.18), usPoint(303, 298, 0.1), usPoint(415, 178, 0.085), usPoint(470, 340, 0.075), usPoint(642, 160, 0.08),
  usPoint(635, 278, 0.09), usPoint(648, 397, 0.15), usPoint(252, 480, 0.15), usPoint(370, 480, 0.12), usPoint(517, 492, 0.2), usPoint(374, 652, 0.22),
  usPoint(502, 652, 0.11), usPoint(677, 510, 0.19), usPoint(702, 615, 0.21), usPoint(660, 763, 0.46), usPoint(183, 556, 1), usPoint(777, 210, 0.21),
  usPoint(876, 280, 0.25), usPoint(796, 378, 0.2), usPoint(817, 520, 0.27), usPoint(818, 640, 0.22), usPoint(824, 780, 0.22), usPoint(880, 680, 0.21),
  usPoint(948, 705, 0.25), usPoint(1025, 733, 0.28), usPoint(965, 602, 0.29), usPoint(995, 530, 0.2), usPoint(893, 455, 0.39), usPoint(960, 450, 0.2),
  usPoint(1040, 445, 0.35), usPoint(1000, 338, 0.31), usPoint(1072, 857, 0.41), usPoint(1098, 668, 0.19), usPoint(1107, 618, 0.26), usPoint(1150, 530, 0.26),
  usPoint(1092, 510, 0.12), usPoint(1157, 422, 0.42), usPoint(1190, 480, 0.19), usPoint(1235, 450, 0.25), usPoint(1222, 505, 0.08), usPoint(1213, 340, 0.7),
  usPoint(1290, 367, 0.27), usPoint(1284, 395, 0.13), usPoint(1307, 400, 0.07), usPoint(1303, 325, 0.08), usPoint(1275, 305, 0.07), usPoint(1358, 240, 0.1),
];

@customElement("heat-map")
class HeatMap extends LitElement {
  static styles = css`
    :host { display: block; width: 2189px; height: 934px; position: relative; background: #2b2b2b; }
    svg { display: block; }
    .coast { fill: none; stroke: #4d4d4d; stroke-width: 2; stroke-linejoin: round; }
    .land { fill: #000; }
    .water { fill: #2b2b2b; stroke: #3a3a3a; stroke-width: 0.8; }
    .speck { fill: none; stroke: #4a4a4a; stroke-width: 1; }
    .channel { fill: none; stroke: #20272b; stroke-width: 1.4; }
    .province { fill: none; stroke: #2e2e2e; stroke-width: 1; }
    .border { fill: none; stroke: #555; stroke-width: 1.4; stroke-linejoin: round; }
    .state { stroke: #0d1214; stroke-width: 1.2; stroke-linejoin: round; }
    .stateline { fill: none; stroke: #10181c; stroke-width: 1.2; stroke-linejoin: round; }
    .attribution {
      position: absolute; left: 0; bottom: 2px; width: 250px; height: 21px; padding-left: 5px;
      background: #202438; color: #fff; font: 16px/21px "Liberation Sans", Arial, sans-serif; white-space: nowrap;
    }
  `;
  render() {
    return html`
      <svg width="2189" height="934" viewBox="6 116 2189 934" aria-label="Map of deaths by state">
        <defs>
          <radialGradient id="dot"><stop offset="0" stop-color="#000" stop-opacity="1" /><stop offset="0.93" stop-color="#000" stop-opacity="0.09" /><stop offset="1" stop-color="#000" stop-opacity="0" /></radialGradient>
          <filter id="ramp" filterUnits="userSpaceOnUse" x="400" y="200" width="1100" height="720" color-interpolation-filters="sRGB">
            <feColorMatrix type="matrix" values="0 0 0 1 0  0 0 0 1 0  0 0 0 1 0  0 0 0 1 0" />
            <feComponentTransfer>
              <feFuncR type="table" tableValues=".345 .345 .38 .50 .68 .87 .92 .94 .93 .87 .77" />
              <feFuncG type="table" tableValues=".6 .6 .61 .65 .72 .82 .79 .74 .66 .53 .38" />
              <feFuncB type="table" tableValues=".5 .5 .47 .39 .31 .27 .28 .3 .31 .31 .3" />
              <feFuncA type="table" tableValues="0 .96 .98 .98 .98 .98 .98 .98 .98 .98 .98" />
            </feComponentTransfer>
          </filter>
        </defs>
        ${LAND.map(([s, p, a]) => svg`<path class="coast" d=${d(s, p, a)} />`)}
        ${LAND.map(([s, p, a]) => svg`<path class="land" d=${d(s, p, a)} />`)}
        ${WATER.map(([s, p, a]) => svg`<path class="water" d=${d(s, p, a)} />`)}
        ${NORTH_ISLES.map(([s, p]) => svg`<path class="land" d=${d(s, p, 0.3)} />`)}
        ${SPECKS.map(([s, p]) => svg`<path class="speck" d=${d(s, p, 0.5, false)} />`)}
        ${FJORDS.map(([s, p]) => svg`<path class="speck" d=${d(s, p, 0.8, false)} />`)}
        ${PROVINCES.map(([s, p, a]) => svg`<path class="province" d=${d(s, p, a, false)} />`)}
        ${BORDERS.map(([s, p, a]) => svg`<path class="border" d=${d(s, p, a, false)} />`)}
        ${STATES.map((t) => svg`<path class="state" fill=${t.fill} d=${d(t.s, t.pts, t.amp)} />`)}
        ${CHANNELS.map(([s, p]) => svg`<path class="channel" d=${d(s, p, 0.7, false)} />`)}
        ${STATE_LINES.map(([p, a]) => svg`<path class="stateline" d=${d(US, p, a, false)} />`)}
        <g filter="url(#ramp)">
          ${HEAT.map((h) => svg`<circle cx=${h.x.toFixed(1)} cy=${h.y.toFixed(1)} r="22.5" fill="url(#dot)" opacity=${h.w} />`)}
        </g>
      </svg>
      <div class="attribution">© 2025 Mapbox © OpenStreetMap</div>
    `;
  }
}

const SCENES = ["Project Motivation", "Gaining Focus", "Age Correlation", "Pinpointing Regions", "What’s Next?"];

@customElement("story-nav")
class StoryNav extends LitElement {
  static styles = css`
    :host { display: flex; justify-content: center; align-items: center; gap: 10px; }
    .scenes { display: flex; gap: 2px; }
    .scene {
      box-sizing: border-box; width: 150px; height: 70px; padding: 10px; background: #ebebeb; color: #757575;
      font: 300 18px/26px "Open Sans", "Noto Sans", sans-serif; letter-spacing: 0.55px;
    }
    .active { background: #d9d9d9; color: #000; }
    svg { display: block; fill: none; stroke: #b4b4b4; stroke-width: 3; stroke-linecap: round; stroke-linejoin: round; }
  `;
  render() {
    return html`
      <svg width="16" height="26" viewBox="0 0 16 26"><path d="M13.5 2 L2.5 12.8 L13.5 23.6" /></svg>
      <div class="scenes">
        ${SCENES.map((t, i) => html`<div class=${i === 3 ? "scene active" : "scene"}>${t}</div>`)}
      </div>
      <svg width="16" height="26" viewBox="0 0 16 26"><path d="M2.5 2 L13.5 12.8 L2.5 23.6" /></svg>
    `;
  }
}

const BARS: [string, number][] = [
  ["California", 1252], ["New York", 965], ["Texas", 655], ["Pennsylvania", 564], ["Florida", 556], ["Illinois", 514], ["Ohio", 493],
  ["North Carolina", 414], ["Michigan", 390], ["Tennessee", 351], ["Massachusetts", 335], ["Georgia", 334], ["Virginia", 317], ["New Jersey", 306],
  ["Missouri", 302], ["Indiana", 259], ["Maryland", 256], ["Alabama", 254], ["Wisconsin", 253], ["Kentucky", 241], ["Louisiana", 216],
  ["Arizona", 215], ["Washington", 214], ["South Carolina", 205], ["Arkansas", 200], ["Connecticut", 199], ["Oklahoma", 195], ["Minnesota", 195], ["Mississippi", 194],
];
const TICKS = Array.from({ length: 30 }, (_, i) => i * 2 + "K");

@customElement("state-bars")
class StateBars extends LitElement {
  static styles = css`
    :host { display: block; width: 1516px; font-family: "Open Sans", "Noto Sans", sans-serif; }
    .title { height: 58px; padding-left: 20px; font-size: 31px; line-height: 59px; color: #333; white-space: nowrap; letter-spacing: 0.7px; }
    .field { display: flex; align-items: center; gap: 5px; height: 22px; padding-left: 22px; font-size: 17px; font-weight: 600; color: #333; letter-spacing: 0.3px; }
    .field svg { margin-top: 4px; }
    .body { display: grid; grid-template-columns: 175px 1317px 24px; }
    .names { padding-top: 2px; }
    .name { height: 20px; padding-right: 4.5px; text-align: right; font-size: 18px; font-weight: 300; line-height: 20px; color: #5a5a5a; white-space: nowrap; letter-spacing: 0.5px; }
    .plot { position: relative; height: 581px; border-bottom: 1px solid #ececec; }
    .grid { position: absolute; inset: 0 0 -6px 0; display: flex; }
    .line { flex: none; box-sizing: border-box; width: 44.06px; border-left: 1px solid #efefef; }
    .bars { position: relative; display: flex; flex-direction: column; gap: 5px; padding: 3px 0 0 1px; }
    .bar { height: 15px; background: #4e79a7; }
    .track { height: 581px; background: #f0f0f0; display: flex; justify-content: center; }
    .thumb { width: 4px; height: 317px; margin-top: 26px; border-radius: 2px; background: #868686; }
    .axis { display: flex; height: 36px; padding-left: 153px; margin-top: 1px; }
    .tick { flex: none; width: 44.06px; text-align: center; font-size: 18px; font-weight: 300; line-height: 36px; color: #5a5a5a; }
    .tick:first-child { text-indent: 25px; }
    .caption { margin-top: 2px; padding-left: 175px; width: 1317px; text-align: center; font-size: 17px; font-weight: 600; line-height: 28px; color: #333; letter-spacing: 0.28px; }
  `;
  render() {
    return html`
      <div class="title">Total Death Count by State</div>
      <div class="field">
        <span class="fieldname">Key Data Sta..</span>
        <svg width="11" height="11" viewBox="0 0 11 11" fill="#666"><rect x="0" y="0" width="11" height="2" /><rect x="0" y="4.5" width="7" height="2" /><rect x="0" y="9" width="3" height="2" /></svg>
      </div>
      <div class="body">
        <div class="names">${BARS.map(([n]) => html`<div class="name">${n}</div>`)}</div>
        <div class="plot">
          <div class="grid">${TICKS.map(() => html`<div class="line"></div>`)}</div>
          <div class="bars">${BARS.map(([, v]) => html`<div class="bar" style="width:${v}px"></div>`)}</div>
        </div>
        <div class="track"><div class="thumb"></div></div>
      </div>
      <div class="axis">${TICKS.map((t) => html`<div class="tick">${t}</div>`)}</div>
      <div class="caption">Deaths Data Total Deaths</div>
    `;
  }
}

const REGIONS = ["(All)", "Central", "Mid-Atlantic", "Midwest", "Mountain", "Northeast", "Other", "Pacific", "South", "Southwest"];

@customElement("region-filter")
class RegionFilter extends LitElement {
  static styles = css`
    :host { display: block; width: 200px; font-family: "Open Sans", "Noto Sans", sans-serif; }
    .head { height: 29px; font-size: 17px; font-weight: 600; line-height: 27px; color: #333; }
    .row { display: flex; align-items: center; gap: 8px; height: 27px; padding-left: 8px; font-size: 18px; font-weight: 300; color: #333; white-space: nowrap; letter-spacing: 0.55px; }
    .box { box-sizing: border-box; width: 22px; height: 22px; border: 1px solid #5e5e5e; border-radius: 1px; background: #fff; }
    .box svg { display: block; }
  `;
  render() {
    return html`
      <div class="head">Region</div>
      ${REGIONS.map((r) => html`<div class="row">
        <div class="box"><svg width="20" height="20" viewBox="0 0 20 20" fill="none" stroke="#5e5e5e" stroke-width="1.5"><path d="M2.8 7.2 L6 9.8 L10 3.4" /></svg></div>
        <span class="name">${r}</span>
      </div>`)}
    `;
  }
}

@customElement("app-root")
class AppRoot extends LitElement {
  static styles = css`
    :host { display: block; width: 3522px; height: 1814px; overflow: hidden; background: #fff; }
    story-nav { height: 70px; padding: 16px 2px 0 0; }
    .top { display: flex; margin: 29px 0 0 6px; }
    heat-map { border-top: 1px solid #d3dbdd; border-bottom: 2px solid #e4e4e4; }
    .note { font-family: "Open Sans", "Noto Sans", sans-serif; font-size: 27px; line-height: 37px; color: #000; white-space: nowrap; letter-spacing: -0.23px; }
    .note p { margin: 0; }
    .note b { font-size: 31px; font-weight: 600; color: #4e79a7; line-height: 44px; letter-spacing: -0.45px; }
    .notes { display: flex; flex-direction: column; gap: 98px; padding: 211px 0 0 77px; }
    .lower { display: flex; margin-top: 3px; }
    region-filter { padding: 94px 0 0 12px; }
    .summary { display: flex; flex-direction: column; gap: 23px; padding: 122px 0 0 175px; }
    .call { font-style: italic; line-height: 38px; letter-spacing: 0.48px; }
  `;
  render() {
    return html`
      <story-nav></story-nav>
      <div class="top">
        <heat-map></heat-map>
        <div class="notes note">
          <p><b>Concentrated Risk:</b> Influenza-related deaths are not evenly distributed across the<br />country. The heat map highlights significant hotspots in California, New York, Texas,<br />Pennsylvania, and Florida.</p>
          <p><b>Mid-Atlantic Vulnerability:</b> The Mid-Atlantic region stands out with consistently higher<br />death rates, signaling the need for strategic planning and targeted support in this area.</p>
          <p><b>Regional Readiness:</b> Understanding these geographic trends allows for more efficient<br />staffing allocation, ensuring that high-risk regions are prepared to handle peak flu season<br />demands.</p>
        </div>
      </div>
      <div class="lower">
        <state-bars></state-bars>
        <region-filter></region-filter>
        <div class="summary note">
          <p><b>California, New York, and Texas:</b> These states are not only large in population, but also house major metropolitan areas,<br />increasing both exposure and hospital strain during flu season.</p>
          <p class="call">Prioritizing these states in staffing plans unsures we're sending help where it's needed most - early, and with sufficient<br />resources.</p>
        </div>
      </div>
    `;
  }
}
